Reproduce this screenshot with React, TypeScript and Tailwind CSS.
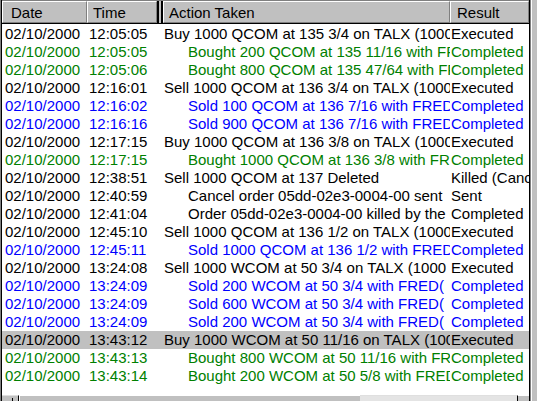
import * as React from "react";

type Tone = "black" | "green" | "blue";

interface Entry {
  date: string;
  time: string;
  action: string;
  indent?: boolean;
  result: string;
  tone: Tone;
  selected?: boolean;
}

const entries: Entry[] = [
  { date: "02/10/2000", time: "12:05:05", action: "Buy 1000 QCOM at 135 3/4 on TALX (1000 shares)", result: "Executed", tone: "black" },
  { date: "02/10/2000", time: "12:05:05", action: "Bought 200 QCOM at 135 11/16 with FRED", indent: true, result: "Completed", tone: "green" },
  { date: "02/10/2000", time: "12:05:06", action: "Bought 800 QCOM at 135 47/64 with FRED", indent: true, result: "Completed", tone: "green" },
  { date: "02/10/2000", time: "12:16:01", action: "Sell 1000 QCOM at 136 3/4 on TALX (1000 shares)", result: "Executed", tone: "black" },
  { date: "02/10/2000", time: "12:16:02", action: "Sold 100 QCOM at 136 7/16 with FRED", indent: true, result: "Completed", tone: "blue" },
  { date: "02/10/2000", time: "12:16:16", action: "Sold 900 QCOM at 136 7/16 with FRED", indent: true, result: "Completed", tone: "blue" },
  { date: "02/10/2000", time: "12:17:15", action: "Buy 1000 QCOM at 136 3/8 on TALX (1000 shares)", result: "Executed", tone: "black" },
  { date: "02/10/2000", time: "12:17:15", action: "Bought 1000 QCOM at 136 3/8 with FRED", indent: true, result: "Completed", tone: "green" },
  { date: "02/10/2000", time: "12:38:51", action: "Sell 1000 QCOM at 137 Deleted", result: "Killed (Canceled)", tone: "black" },
  { date: "02/10/2000", time: "12:40:59", action: "Cancel order 05dd-02e3-0004-00 sent", indent: true, result: "Sent", tone: "black" },
  { date: "02/10/2000", time: "12:41:04", action: "Order 05dd-02e3-0004-00 killed by the exchange", indent: true, result: "Completed", tone: "black" },
  { date: "02/10/2000", time: "12:45:10", action: "Sell 1000 QCOM at 136 1/2 on TALX (1000 shares)", result: "Executed", tone: "black" },
  { date: "02/10/2000", time: "12:45:11", action: "Sold 1000 QCOM at 136 1/2 with FRED", indent: true, result: "Completed", tone: "blue" },
  { date: "02/10/2000", time: "13:24:08", action: "Sell 1000 WCOM at 50 3/4 on TALX (1000 shares)", result: "Executed", tone: "black" },
  { date: "02/10/2000", time: "13:24:09", action: "Sold 200 WCOM at 50 3/4 with FRED(", indent: true, result: "Completed", tone: "blue" },
  { date: "02/10/2000", time: "13:24:09", action: "Sold 600 WCOM at 50 3/4 with FRED(", indent: true, result: "Completed", tone: "blue" },
  { date: "02/10/2000", time: "13:24:09", action: "Sold 200 WCOM at 50 3/4 with FRED(", indent: true, result: "Completed", tone: "blue" },
  { date: "02/10/2000", time: "13:43:12", action: "Buy 1000 WCOM at 50 11/16 on TALX (1000 shares)", result: "Executed", tone: "black", selected: true },
  { date: "02/10/2000", time: "13:43:13", action: "Bought 800 WCOM at 50 11/16 with FRED", indent: true, result: "Completed", tone: "green" },
  { date: "02/10/2000", time: "13:43:14", action: "Bought 200 WCOM at 50 5/8 with FRED", indent: true, result: "Completed", tone: "green" },
];

const toneClass: Record<Tone, string> = {
  black: "text-black",
  green: "text-[#008000]",
  blue: "text-[#0000ff]",
};

function HeaderCell({ label, width, pad }: { label: string; width: string; pad: string }) {
  return (
    <div
      className={`${width} ${pad} h-[22px] shrink-0 overflow-hidden border-t border-l border-r border-b border-t-white border-l-white border-r-[#808080] border-b-[#808080] pt-[2px] leading-[17px]`}
    >
      {label}
    </div>
  );
}

function Row({ entry }: { entry: Entry }) {
  return (
    <div
      className={`flex h-[18px] leading-[18px] whitespace-nowrap ${toneClass[entry.tone]} ${
        entry.selected ? "bg-[#c0c0c0]" : ""
      }`}
    >
      <div className="w-[85px] shrink-0 overflow-hidden pl-[3px]">{entry.date}</div>
      <div className="w-[74px] shrink-0 overflow-hidden pl-[2px]">{entry.time}</div>
      <div className={`w-[289px] shrink-0 overflow-hidden ${entry.indent ? "pl-[27px]" : "pl-[3px]"}`}>
        {entry.action}
      </div>
      <div className="w-[79px] shrink-0 overflow-hidden pl-[1px]">{entry.result}</div>
    </div>
  );
}

export default function App() {
  return (
    <div
      className="flex h-[401px] w-[537px] overflow-hidden bg-[#c0c0c0] text-[15px] text-black"
      style={{ fontFamily: '"Liberation Sans", Arial, sans-serif' }}
    >
      <div className="w-px shrink-0 bg-[#808080]" />
      <div className="w-px shrink-0 bg-black" />

      <div className="flex w-[527px] shrink-0 flex-col">
        {/* column headers */}
        <div className="flex shrink-0 border-t border-b border-t-[#808080] border-b-black bg-[#c0c0c0]">
          <HeaderCell label="Date" width="w-[85px]" pad="pl-[8px]" />
          <HeaderCell label="Time" width="w-[70px]" pad="pl-[5px]" />
          <div className="flex h-[22px] w-[6px] shrink-0">
            <div className="w-[2px] bg-black" />
            <div className="w-[2px] bg-[#c0c0c0]" />
            <div className="w-[2px] bg-black" />
          </div>
          <HeaderCell label="Action Taken" width="w-[287px]" pad="pl-[5px]" />
          <HeaderCell label="Result" width="w-[79px]" pad="pl-[6px]" />
        </div>

        {/* list body */}
        <div className="flex h-[371px] shrink-0 flex-col bg-white pt-px">
          {entries.map((entry, i) => (
            <Row key={i} entry={entry} />
          ))}
        </div>

        {/* horizontal scrollbar, cut off by the window edge */}
        <div className="flex h-[6px] shrink-0 bg-[#c0c0c0]">
          <div className="relative w-[17px] shrink-0 border-t border-r border-t-[#dfdfdf] border-r-black">
            <div className="absolute left-[10px] top-[2px] h-[4px] w-px bg-black" />
          </div>
          <div className="w-[341px] shrink-0 border-t border-l border-t-white border-l-white bg-[#c0c0c0]" />
          <div className="flex-1 border-t border-t-[#dfdfdf] bg-[#e4e4e4]" />
          <div className="w-[12px] shrink-0 border-t border-l border-t-white border-l-black bg-[#c0c0c0]" />
        </div>
      </div>

      {/* edge of the vertical scrollbar */}
      <div className="flex w-[8px] shrink-0 border-l border-l-black">
        <div className="w-px bg-[#808080]" />
        <div className="w-px bg-white" />
        <div className="flex-1 bg-[#c0c0c0]" />
      </div>
    </div>
  );
}
